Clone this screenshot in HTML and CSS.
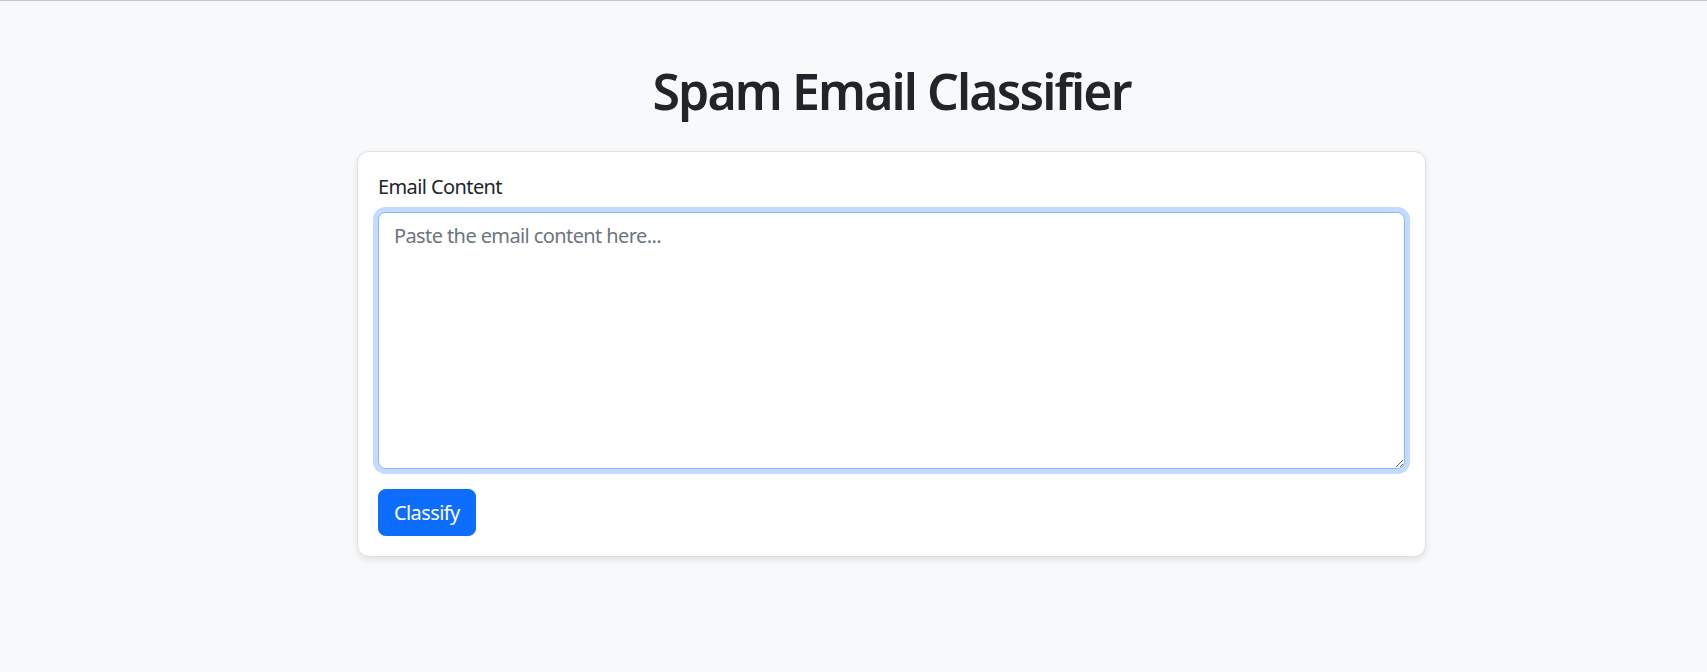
FILE: index.html
```html
<!DOCTYPE html>
<html lang="en">
<head>
<meta charset="utf-8">
<title>Spam Email Classifier</title>
<link rel="stylesheet" href="styles.css">
</head>
<body>
<main class="page">
  <div class="wrap">
    <h1 class="title">Spam Email Classifier</h1>
    <form class="card">
      <div class="field">
        <label class="label" for="email">Email Content</label>
        <textarea id="email" class="textarea" placeholder="Paste the email content here..."></textarea>
      </div>
      <button type="button" class="btn">Classify</button>
    </form>
  </div>
</main>
</body>
</html>
```

FILE: styles.css
```css
html, body {
  margin: 0;
  padding: 0;
}
body {
  background: #f8f9fa;
  color: #212529;
  font-family: "Noto Sans", "Open Sans", sans-serif;
  letter-spacing: -0.6px;
  border-top: 1px solid #c6c8cb;
  min-height: 671px;
}
.page {
  display: flex;
  justify-content: center;
  padding-left: 76px;
  padding-top: 60px;
}
.wrap {
  width: 1069px;
}
.title {
  margin: 0 0 30px;
  font-size: 50px;
  line-height: 60px;
  font-weight: 600;
  letter-spacing: -1.9px;
  text-align: center;
}
.card {
  display: block;
  margin: 0;
  background: #fff;
  border: 1px solid #dfe1e4;
  border-radius: 12px;
  box-shadow: 0 2.5px 7px rgba(0, 0, 0, 0.09);
  padding: 20px;
}
.field {
  margin-bottom: 20px;
}
.label {
  display: block;
  font-size: 20px;
  line-height: 30px;
  margin-bottom: 10px;
}
.textarea {
  display: block;
  box-sizing: border-box;
  width: 100%;
  height: 257px;
  margin: 0;
  padding: 7.5px 15px;
  font-family: inherit;
  font-size: 20px;
  line-height: 30px;
  letter-spacing: -0.6px;
  color: #212529;
  background: #fff;
  border: 1px solid #86b7fe;
  border-radius: 7.5px;
  box-shadow: 0 0 0 5px rgba(13, 110, 253, 0.25);
  outline: none;
  resize: vertical;
}
.textarea::placeholder {
  color: #6c757d;
  opacity: 1;
}
.btn {
  display: inline-block;
  margin: 0;
  padding: 7.5px 15px;
  font-family: inherit;
  font-size: 20px;
  line-height: 30px;
  letter-spacing: -0.6px;
  color: #fff;
  background: #0d6efd;
  border: 1px solid #0d6efd;
  border-radius: 7.5px;
  cursor: pointer;
}
```
